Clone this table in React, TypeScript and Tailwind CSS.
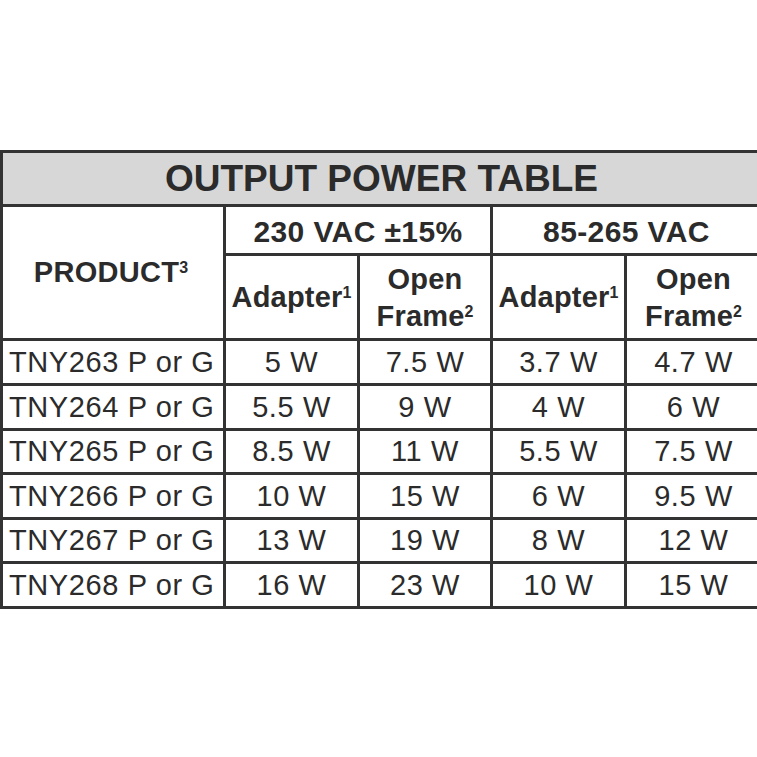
import React from 'react';

const rows = [
  ['TNY263 P or G', '5 W', '7.5 W', '3.7 W', '4.7 W'],
  ['TNY264 P or G', '5.5 W', '9 W', '4 W', '6 W'],
  ['TNY265 P or G', '8.5 W', '11 W', '5.5 W', '7.5 W'],
  ['TNY266 P or G', '10 W', '15 W', '6 W', '9.5 W'],
  ['TNY267 P or G', '13 W', '19 W', '8 W', '12 W'],
  ['TNY268 P or G', '16 W', '23 W', '10 W', '15 W'],
];

function Sup({ n }: { n: string }) {
  return <span className="relative -top-[9px] text-[16px] font-bold tracking-normal">{n}</span>;
}

const cell = 'border-[3px] border-[#333333] p-0';

export default function App() {
  return (
    <div className="h-[757px] w-[757px] overflow-hidden bg-white pt-[150px] font-['Liberation_Sans',Arial,sans-serif] text-[#2b2b2b]">
      <table className="w-[760px] table-fixed border-collapse">
        <colgroup>
          <col className="w-[223px]" />
          <col className="w-[134px]" />
          <col className="w-[133px]" />
          <col className="w-[134px]" />
          <col className="w-[136px]" />
        </colgroup>
        <thead>
          <tr className="h-[54px]">
            <th colSpan={5} className={`${cell} bg-[#d7d7d7] text-center text-[37px] font-bold leading-none`}>
              OUTPUT POWER TABLE
            </th>
          </tr>
          <tr className="h-[49px]">
            <th rowSpan={2} className={`${cell} pr-[4px] text-center text-[29px] font-bold leading-none tracking-[0.3px]`}>
              PRODUCT<Sup n="3" />
            </th>
            <th colSpan={2} className={`${cell} text-center text-[30px] font-bold leading-none tracking-[0.4px]`}>
              <span className="relative top-[2px]">230 VAC ±15%</span>
            </th>
            <th colSpan={2} className={`${cell} text-center text-[30px] font-bold leading-none tracking-[0.4px]`}>
              <span className="relative top-[2px]">85-265 VAC</span>
            </th>
          </tr>
          <tr className="h-[85px]">
            {[0, 1].map((k) => (
              <React.Fragment key={k}>
                <th className={`${cell} whitespace-nowrap text-center text-[29px] font-bold leading-[37px] tracking-[0.2px]`}>
                  <span className="relative top-[2px]">
                    Adapter<Sup n="1" />
                  </span>
                </th>
                <th className={`${cell} text-center text-[29px] font-bold leading-[37px] tracking-[0.2px]`}>
                  <div className="relative top-[3px]">
                    Open
                    <br />
                    Frame<Sup n="2" />
                  </div>
                </th>
              </React.Fragment>
            ))}
          </tr>
        </thead>
        <tbody>
          {rows.map((r, ri) => (
            <tr key={r[0]} className={ri === 2 || ri === 4 ? 'h-[44px]' : 'h-[45px]'}>
              {r.map((v, i) => (
                <td
                  key={i}
                  className={`${cell} whitespace-nowrap text-[29px] leading-none tracking-[0.6px] ${i === 0 ? 'pl-[6px] text-left' : 'text-center'}`}
                >
                  {v}
                </td>
              ))}
            </tr>
          ))}
        </tbody>
      </table>
    </div>
  );
}
